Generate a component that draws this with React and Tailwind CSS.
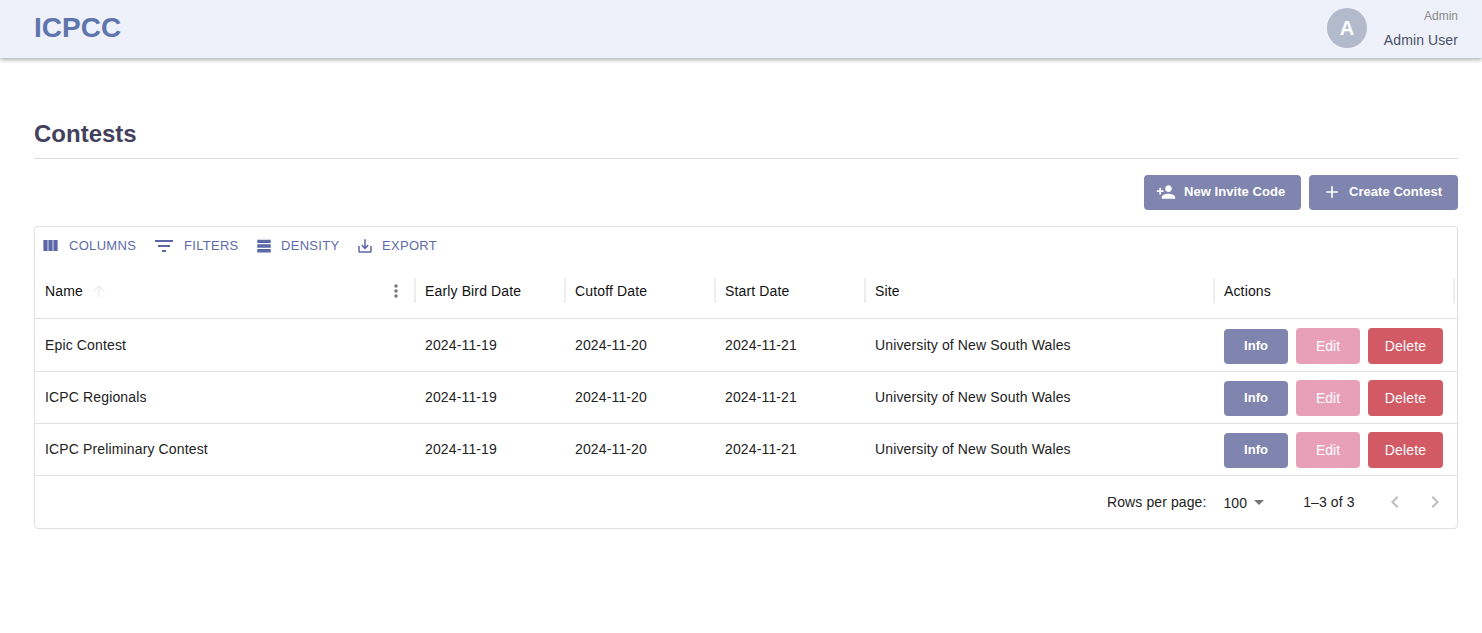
const F = "[font-family:'Liberation_Sans',Arial,sans-serif]";

const cols = "grid grid-cols-[380px_150px_150px_150px_349px_240px]";

function Ic({ d, className = "" }) {
  return (
    <svg viewBox="0 0 24 24" fill="currentColor" className={className}>
      <path d={d} />
    </svg>
  );
}

const icons = {
  columns: "M14.67 5v14H9.33V5zm1 14H21V5h-5.33zm-7.34 0V5H3v14z",
  filter: "M10 18h4v-2h-4zM3 6v2h18V6zm3 7h12v-2H6z",
  density: "M3 20.5h18V16H3zM3 14.25h18v-4.5H3zM3 8h18V3.5H3z",
  export: "M19 12v7H5v-7H3v7c0 1.1.9 2 2 2h14c1.1 0 2-.9 2-2v-7zm-6 .67 2.59-2.58L17 11.5l-5 5-5-5 1.41-1.41L11 12.67V3h2z",
  personAdd: "M15 12c2.21 0 4-1.79 4-4s-1.79-4-4-4-4 1.79-4 4 1.79 4 4 4m-9-2V7H4v3H1v2h3v3h2v-3h3v-2zm9 4c-2.67 0-8 1.34-8 4v2h16v-2c0-2.66-5.33-4-8-4",
  plus: "M19 13h-6v6h-2v-6H5v-2h6V5h2v6h6z",
  arrowUp: "M4 12l1.41 1.41L11 7.83V20h2V7.83l5.58 5.59L20 12l-8-8-8 8z",
  dots: "M12 8c1.1 0 2-.9 2-2s-.9-2-2-2-2 .9-2 2 .9 2 2 2zm0 2c-1.1 0-2 .9-2 2s.9 2 2 2 2-.9 2-2-.9-2-2-2zm0 6c-1.1 0-2 .9-2 2s.9 2 2 2 2-.9 2-2-.9-2-2-2z",
  caret: "M7 10l5 5 5-5z",
  prev: "M15.41 7.41 14 6l-6 6 6 6 1.41-1.41L10.83 12z",
  next: "M10 6 8.59 7.41 13.17 12l-4.58 4.59L10 18l6-6z",
};

function ToolBtn({ icon, label, gap, iconClass, width }) {
  return (
    <button className={`flex h-[30px] items-center text-[13px] leading-none tracking-[0.3px] text-[#5c6bab] ${width}`}>
      <Ic d={icon} className={`${iconClass} shrink-0 text-[#5c67a8]`} />
      <span className={gap}>{label}</span>
    </button>
  );
}

function HeadCell({ children }) {
  return (
    <div className="relative flex h-full items-center pb-[2px] pl-[10px] text-sm tracking-[0.14px] text-[#111]">
      {children}
      <span className="absolute top-[13px] right-[-1px] h-[25px] w-[2px] bg-[#eeeeee]" />
    </div>
  );
}

function Row({ name, first }) {
  return (
    <div className={`${cols} ${first ? "h-[53px]" : "h-[52px] pb-px"} items-center border-b border-[#e0e0e0] text-sm tracking-[0.14px] text-[#222]`}>
      <div className="pl-[10px]">{name}</div>
      <div className="pl-[10px]">2024-11-19</div>
      <div className="pl-[10px]">2024-11-20</div>
      <div className="pl-[10px]">2024-11-21</div>
      <div className="pl-[10px]">University of New South Wales</div>
      <div className={`flex items-end gap-2 self-start pl-[10px] tracking-normal ${first ? "pt-[9px]" : "pt-2"}`}>
        <button className="h-[35px] w-16 rounded bg-[#7f85ae] pb-px text-[13px] font-bold text-white">Info</button>
        <button className="h-9 w-16 rounded bg-[#e89fb8] text-sm text-white">Edit</button>
        <button className="h-9 w-[75px] rounded bg-[#d25a65] text-sm tracking-[0.14px] text-white">Delete</button>
      </div>
    </div>
  );
}

export default function App() {
  return (
    <div className={`${F} min-h-[633px] bg-white`}>
      <header className="flex h-[58px] items-center justify-between bg-[#eef1f9] pr-6 pl-[34px] shadow-[0_2px_4px_rgba(0,0,0,0.3)]">
        <div className="pb-[2px] text-[28px] leading-none font-bold text-[#5e76ad]">ICPCC</div>
        <div className="flex items-center gap-[17px] pb-[2px]">
          <div className="flex size-10 items-center justify-center rounded-full bg-[#b2bacb] text-xl leading-none font-bold text-white">A</div>
          <div className="flex flex-col items-end">
            <div className="text-xs leading-[14px] text-[#8a8a8a]">Admin</div>
            <div className="mt-[9px] text-sm leading-4 tracking-[0.1px] text-[#4a5068]">Admin User</div>
          </div>
        </div>
      </header>

      <main className="px-6 pt-[60px] pl-[34px]">
        <h1 className="border-b border-[#dddddd] pb-2 text-2xl leading-[32px] font-bold text-[#433f5c]">Contests</h1>

        <div className="mt-4 flex justify-end gap-2">
          <button className="flex h-[35px] w-[157px] items-center rounded bg-[#7f85ae] pb-px pl-3 text-[13px] font-bold tracking-[0.05px] text-white">
            <Ic d={icons.personAdd} className="size-5" />
            <span className="ml-2">New Invite Code</span>
          </button>
          <button className="flex h-[35px] w-[149px] items-center rounded bg-[#7f85ae] pb-px pl-[13px] text-[13px] font-bold tracking-[0.05px] text-white">
            <Ic d={icons.plus} className="size-5" />
            <span className="ml-[7px]">Create Contest</span>
          </button>
        </div>

        <section className="mt-4 h-[303px] rounded border border-[#e0e0e0]">
          <div className="flex h-[38px] items-center pb-px pl-[5px]">
            <ToolBtn icon={icons.columns} label="COLUMNS" gap="ml-[9px]" iconClass="ml-px size-[19px]" width="w-[112px]" />
            <ToolBtn icon={icons.filter} label="FILTERS" gap="ml-[8px]" iconClass="size-[24px]" width="w-[102px]" />
            <ToolBtn icon={icons.density} label="DENSITY" gap="ml-[8px]" iconClass="ml-px size-[18px]" width="w-[101px]" />
            <ToolBtn icon={icons.export} label="EXPORT" gap="ml-[8px]" iconClass="ml-px size-[18px]" />
          </div>

          <div className={`${cols} h-[54px] items-center border-b border-[#e0e0e0]`}>
            <HeadCell>
              <span>Name</span>
              <Ic d={icons.arrowUp} className="ml-[7px] size-[18px] text-[#eeeeee]" />
              <Ic d={icons.dots} className="absolute top-[16px] right-[9px] size-[20px] text-[#757575]" />
            </HeadCell>
            <HeadCell>Early Bird Date</HeadCell>
            <HeadCell>Cutoff Date</HeadCell>
            <HeadCell>Start Date</HeadCell>
            <HeadCell>Site</HeadCell>
            <HeadCell>Actions</HeadCell>
          </div>

          <Row name="Epic Contest" first />
          <Row name="ICPC Regionals" />
          <Row name="ICPC Preliminary Contest" />

          <div className="flex h-[51px] items-center pt-px text-sm tracking-[0.1px] text-[#222]">
            <span className="ml-[1072px]">Rows per page:</span>
            <span className="ml-[17px] pt-px">100</span>
            <Ic d={icons.caret} className="size-[24px] text-[#757575]" />
            <span className="ml-[32px]">1–3 of 3</span>
            <Ic d={icons.prev} className="ml-[28px] size-[24px] text-[#bdbdbd]" />
            <Ic d={icons.next} className="ml-[16px] size-[24px] text-[#bdbdbd]" />
          </div>
        </section>
      </main>
    </div>
  );
}
